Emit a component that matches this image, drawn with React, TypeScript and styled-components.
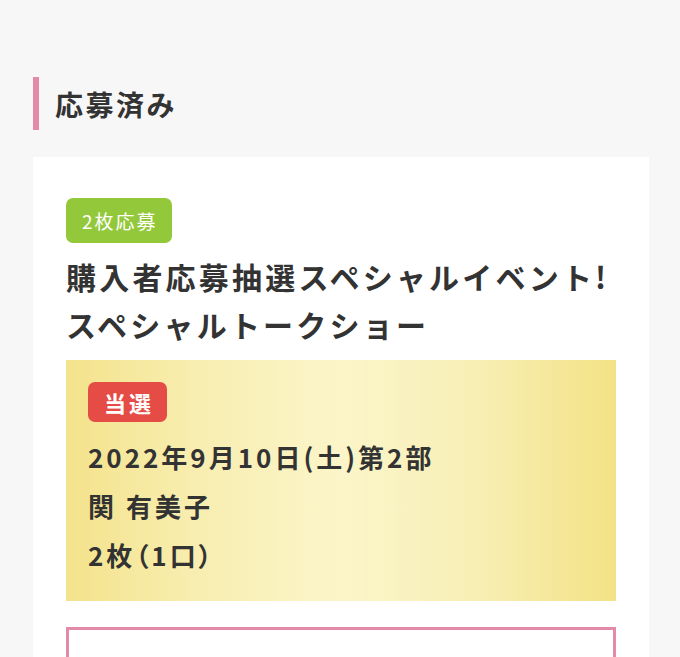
import React from "react";
import styled, { createGlobalStyle } from "styled-components";

const Global = createGlobalStyle`
  html, body { margin: 0; padding: 0; background: #f7f7f7; }
  body { font-family: "Noto Sans CJK JP", "Noto Sans", sans-serif; color: #333; }
`;

const Page = styled.div`
  padding: 77px 31px 0 33px;
  height: 657px;
  box-sizing: border-box;
  overflow: hidden;
`;

const SectionTitle = styled.h2`
  margin: 0;
  border-left: 6px solid #e48aa8;
  padding-left: 16px;
  height: 53px;
  display: flex;
  align-items: center;
  font-size: 28px;
  font-weight: 700;
  letter-spacing: 2.5px;
  color: #333;
`;

const Card = styled.div`
  margin-top: 27px;
  background: #fff;
  padding: 41px 33px 40px;
`;

const Tag = styled.span<{ $bg: string; $bold?: boolean }>`
  display: inline-flex;
  align-items: center;
  justify-content: center;
  background: ${(p) => p.$bg};
  color: #fff;
  border-radius: 7px;
  font-weight: ${(p) => (p.$bold ? 700 : 400)};
`;

const CountTag = styled(Tag)`
  height: 45px;
  padding: 0 14px 0 16px;
  font-size: 19px;
  letter-spacing: 2px;
`;

const WinTag = styled(Tag)`
  height: 40px;
  padding: 0 13px 0 16px;
  font-size: 22px;
  letter-spacing: 3px;
`;

const Title = styled.h3`
  margin: 9px 0 0;
  font-size: 30px;
  font-weight: 700;
  line-height: 48px;
  letter-spacing: 3.2px;
  white-space: nowrap;
  color: #333;
`;

const ResultBox = styled.div`
  margin-top: 12px;
  padding: 22px 22px 22px;
  background: linear-gradient(
    to right,
    #f4e38c 0%,
    #f8eeb2 25%,
    #fbf5c9 50%,
    #f8efb6 74%,
    #f3e285 100%
  );
  display: flex;
  flex-direction: column;
  align-items: flex-start;
`;

const InfoLine = styled.p<{ $palt?: boolean }>`
  margin: 0;
  font-size: 26px;
  font-weight: 700;
  line-height: 49px;
  letter-spacing: 3px;
  color: #333;
  font-feature-settings: ${(p) => (p.$palt ? '"palt"' : "normal")};
`;

const FirstInfo = styled(InfoLine)`
  margin-top: 10px;
`;

const OutlineBox = styled.div`
  margin-top: 26px;
  border: 3px solid #e38aa8;
  height: 80px;
`;

export default function App() {
  return (
    <>
      <Global />
      <Page>
        <SectionTitle>応募済み</SectionTitle>
        <Card>
          <CountTag $bg="#93c83b">2枚応募</CountTag>
          <Title>
            購入者応募抽選スペシャルイベント!
            <br />
            スペシャルトークショー
          </Title>
          <ResultBox>
            <WinTag $bg="#e44c45" $bold>当選</WinTag>
            <FirstInfo>2022年9月10日(土)第2部</FirstInfo>
            <InfoLine>関 有美子</InfoLine>
            <InfoLine $palt>2枚（1口）</InfoLine>
          </ResultBox>
          <OutlineBox />
        </Card>
      </Page>
    </>
  );
}
